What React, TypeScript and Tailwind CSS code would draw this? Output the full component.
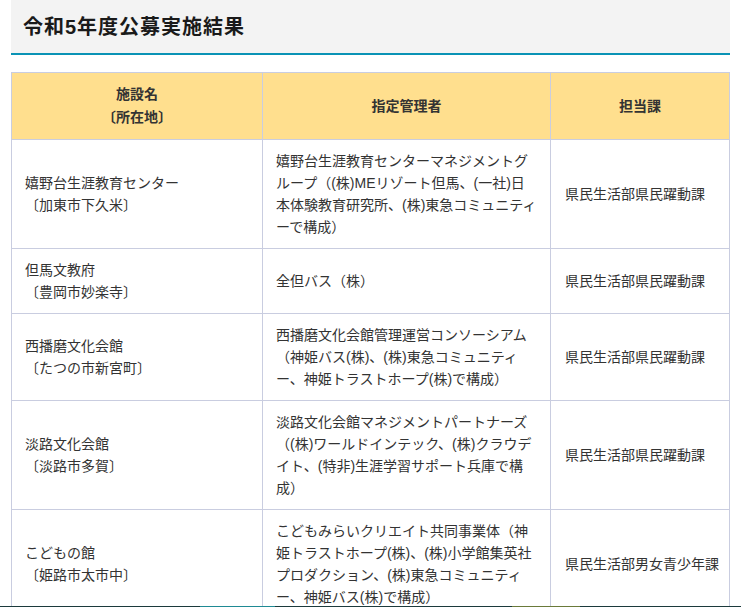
import React from 'react';

const rows = [
    {
        name: '嬉野台生涯教育センター',
        place: '〔加東市下久米〕',
        manager: ['嬉野台生涯教育センターマネジメントグ', 'ループ（(株)MEリゾート但馬、(一社)日', '本体験教育研究所、(株)東急コミュニティ', 'ーで構成）'],
        dept: '県民生活部県民躍動課',
    },
    {
        name: '但馬文教府',
        place: '〔豊岡市妙楽寺〕',
        manager: ['全但バス（株）'],
        dept: '県民生活部県民躍動課',
    },
    {
        name: '西播磨文化会館',
        place: '〔たつの市新宮町〕',
        manager: ['西播磨文化会館管理運営コンソーシアム', '（神姫バス(株)、(株)東急コミュニティ', 'ー、神姫トラストホープ(株)で構成）'],
        dept: '県民生活部県民躍動課',
    },
    {
        name: '淡路文化会館',
        place: '〔淡路市多賀〕',
        manager: ['淡路文化会館マネジメントパートナーズ', '（(株)ワールドインテック、(株)クラウデ', 'イト、(特非)生涯学習サポート兵庫で構', '成）'],
        dept: '県民生活部県民躍動課',
    },
    {
        name: 'こどもの館',
        place: '〔姫路市太市中〕',
        manager: ['こどもみらいクリエイト共同事業体（神', '姫トラストホープ(株)、(株)小学館集英社', 'プロダクション、(株)東急コミュニティ', 'ー、神姫バス(株)で構成）'],
        dept: '県民生活部男女青少年課',
    },
];

export default function App() {
    return (
        <div className="min-h-screen bg-white px-[11px] text-[#333] font-['Liberation_Sans','Noto_Sans_CJK_JP',sans-serif]">
            {/* Heading */}
            <div className="bg-[#f3f3f3] border-b-2 border-[#0a93b5] h-[55px] flex items-center px-[12px]">
                <h2 className="text-[20px] font-bold text-[#1a1a1a] tracking-[1px]">令和5年度公募実施結果</h2>
            </div>

            {/* Table */}
            <table className="mt-[17px] w-full border-collapse table-fixed text-[14px] leading-[22px]">
                <colgroup>
                    <col className="w-[251px]" />
                    <col className="w-[288px]" />
                    <col />
                </colgroup>
                <thead>
                    <tr className="bg-[#ffdf8e] leading-[23px]">
                        <th className="border border-[#c9cde0] px-[13px] py-[10px] font-bold text-center">施設名<br />〔所在地〕</th>
                        <th className="border border-[#c9cde0] px-[13px] py-[10px] font-bold text-center">指定管理者</th>
                        <th className="border border-[#c9cde0] px-[13px] py-[10px] font-bold text-center">担当課</th>
                    </tr>
                </thead>
                <tbody>
                    {rows.map((r) => (
                        <tr key={r.name}>
                            <td className="border border-[#c9cde0] px-[13px] py-[10px] align-middle">
                                {r.name}<br />{r.place}
                            </td>
                            <td className="border border-[#c9cde0] px-[13px] py-[10px] align-middle whitespace-nowrap">
                                {r.manager.map((m, i) => (
                                    <div key={i}>{m}</div>
                                ))}
                            </td>
                            <td className="border border-[#c9cde0] pl-[14px] pr-[8px] py-[10px] align-middle whitespace-nowrap">{r.dept}</td>
                        </tr>
                    ))}
                </tbody>
            </table>

            {/* Footer edge peeking in */}
            <div className="fixed bottom-0 left-0 right-0 h-px flex">
                <div className="w-[200px] bg-[#1c3a3c]"></div>
                <div className="w-[75px] bg-[#1f8a94]"></div>
                <div className="w-[237px] bg-[#1c3a3c]"></div>
                <div className="w-[68px] bg-[#6a7a3a]"></div>
                <div className="flex-1 bg-[#1c3a3c]"></div>
            </div>
        </div>
    );
}
